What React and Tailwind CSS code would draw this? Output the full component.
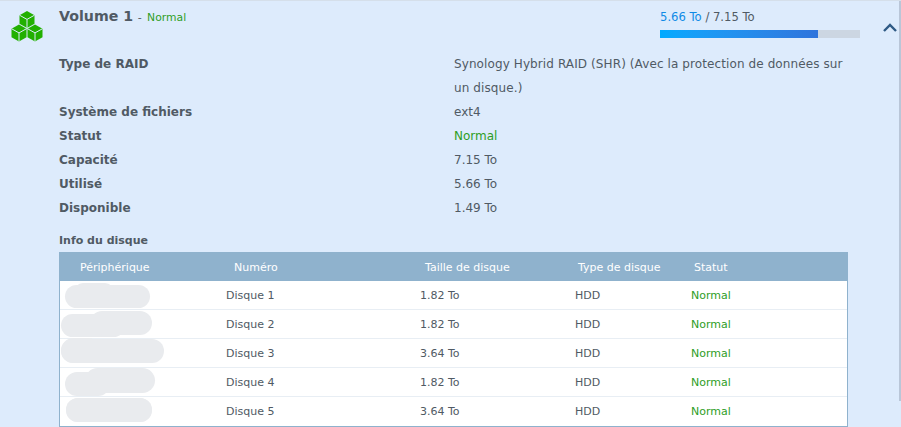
const rows = [
  { num: 'Disque 1', size: '1.82 To' },
  { num: 'Disque 2', size: '1.82 To' },
  { num: 'Disque 3', size: '3.64 To' },
  { num: 'Disque 4', size: '1.82 To' },
  { num: 'Disque 5', size: '3.64 To' },
];

// scribbles that hide the device names, two overlapping strokes per row
const blobs = [
  ['left-[5px] top-[4px] w-[85px] h-[23px]', 'left-[14px] top-[2px] w-[40px] h-[18px]'],
  ['left-[1px] top-[4px] w-[64px] h-[23px]', 'left-[30px] top-[1px] w-[62px] h-[24px]'],
  ['left-[1px] top-[-1px] w-[40px] h-[25px]', 'left-[1px] top-[0px] w-[103px] h-[24px]'],
  ['left-[5px] top-[4px] w-[45px] h-[24px]', 'left-[25px] top-[0px] w-[70px] h-[25px]'],
  ['left-[6px] top-[1px] w-[86px] h-[24px]', 'left-[6px] top-[1px] w-[86px] h-[24px]'],
];

const infos = [
  ['Système de fichiers', 'ext4'],
  ['Statut', 'Normal'],
  ['Capacité', '7.15 To'],
  ['Utilisé', '5.66 To'],
  ['Disponible', '1.49 To'],
];

const Cubes = () => (
  <svg width="32" height="32" viewBox="0 0 32 32" className="block">
    <path d="M16 0l7.5 4.2v8.6L16 17l-7.5-4.2V4.2z" fill="#22b000" />
    <path d="M8 13.5l7.5 4.2v8.6L8 30.5.5 26.3v-8.6z" fill="#22b000" />
    <path d="M24 13.5l7.5 4.2v8.6L24 30.5l-7.5-4.2v-8.6z" fill="#22b000" />
    <path d="M8.5 4.2L16 8.4l7.5-4.2M16 8.4V17M.5 17.7L8 21.9l7.5-4.2M8 21.9v8.6M16.5 17.7l7.5 4.2 7.5-4.2M24 21.9v8.6" fill="none" stroke="#dcebfc" strokeWidth="1" />
  </svg>
);

export default function App() {
  return (
    <div className="relative w-[901px] h-[427px] overflow-hidden bg-[#ddebfc] border-t border-[#d5dfea] text-[#505a64] text-[12px] font-['DejaVu_Sans',sans-serif]">
      <div className="absolute right-0 top-0 w-[2px] h-[400px] bg-[#b9c6d8]" />
      <div className="flex">
        <div className="w-[59px] shrink-0 pl-[11px] pt-[10px]">
          <Cubes />
        </div>
        <div className="w-[801px] shrink-0">
          <div className="flex h-[51px]">
            <div className="w-[601px] pt-[3px]">
              <span className="text-[14.2px] font-bold leading-[24px]">Volume 1</span>
              <span className="text-[11px] tracking-[1px]"> - </span>
              <span className="text-[10.8px] text-[#2e9e1f]">Normal</span>
            </div>
            <div className="w-[200px] pt-[8px]">
              <div className="text-[11.6px] leading-[16px]">
                <span className="text-[#0f8ae6]">5.66 To</span> / 7.15 To
              </div>
              <div className="mt-[5px] h-[8px] bg-[#ccd6e2]">
                <div className="h-full w-[158px] bg-gradient-to-r from-[#00aaff] to-[#2f74dc]" />
              </div>
            </div>
          </div>
          <div className="flex">
            <div className="w-[395px] font-bold leading-[24px]">Type de RAID</div>
            <div className="w-[400px] leading-[24px] tracking-[0.1px]">Synology Hybrid RAID (SHR) (Avec la protection de données sur un disque.)</div>
          </div>
          {infos.map(([label, value]) => (
            <div key={label} className="flex leading-[24px]">
              <div className="w-[395px] font-bold">{label}</div>
              <div className={value === 'Normal' ? 'text-[#2e9e1f]' : ''}>{value}</div>
            </div>
          ))}
          <div className="mt-[13px] font-bold text-[11px] leading-[16px]">Info du disque</div>
          <div className="mt-[3px] w-[789px] border border-[#8fb2cd] bg-white text-[11px]">
            <div className="flex h-[28px] items-center pt-[2px] bg-[#8fb2cd] text-white">
              <div className="w-[165px] pl-[20px]">Périphérique</div>
              <div className="w-[191px] pl-[9px]">Numéro</div>
              <div className="w-[153px] pl-[9px]">Taille de disque</div>
              <div className="w-[116px] pl-[9px]">Type de disque</div>
              <div className="pl-[9px]">Statut</div>
            </div>
            {rows.map((r, i) => (
              <div key={r.num} className={`relative flex h-[29px] items-center pt-[2px] ${i < 4 ? 'border-b border-[#e8eef4]' : ''}`}>
                {blobs[i].map((b) => (
                  <div key={b} className={`absolute rounded-full bg-[#e9ebee] ${b}`} />
                ))}
                <div className="w-[166px]" />
                <div className="w-[194px]">{r.num}</div>
                <div className="w-[155px]">{r.size}</div>
                <div className="w-[116px]">HDD</div>
                <div className="text-[#2e9e1f]">Normal</div>
              </div>
            ))}
          </div>
        </div>
        <div className="w-[41px] shrink-0 pt-[22px] pl-[23px]">
          <svg width="14" height="9" viewBox="0 0 14 9" className="block"><path d="M1 8l6-6 6 6" fill="none" stroke="#2f5a85" strokeWidth="2.4" /></svg>
        </div>
      </div>
    </div>
  );
}
